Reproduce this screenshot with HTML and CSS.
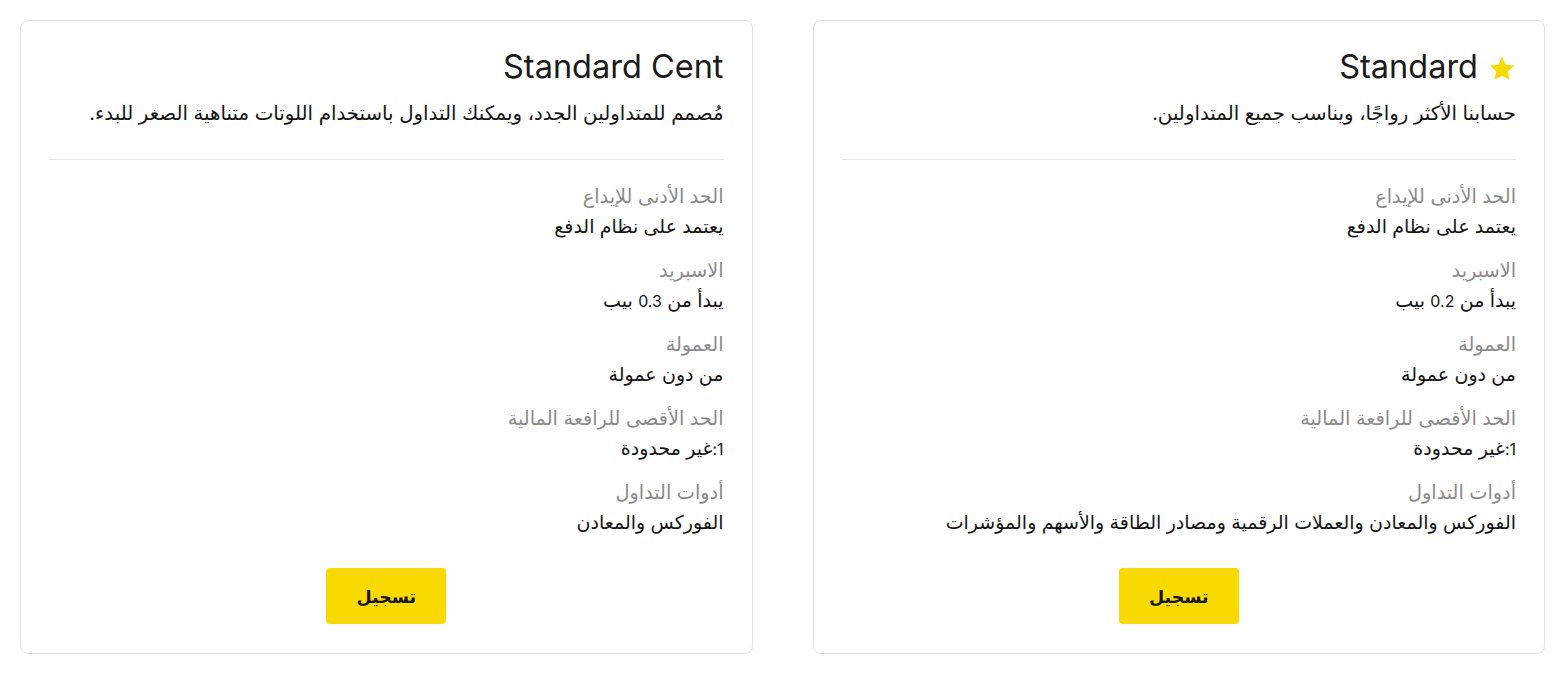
FILE: index.html
```html
<!DOCTYPE html>
<html lang="ar" dir="rtl">
<head>
    <meta charset="UTF-8">
    <meta name="viewport" content="width=device-width, initial-scale=1.0">
    <title>Account types</title>
    <link rel="stylesheet" href="styles.css">
</head>
<body>
    <div class="plans">
        <!-- Standard -->
        <div class="card">
            <div class="card-head">
                <h2 class="title">
                    <svg class="star" viewBox="0 0 24 24" width="28" height="28"><path d="M12 1.6l3.1 6.7 7.3.8-5.45 5 1.55 7.2L12 17.7l-6.5 3.6 1.55-7.2L1.6 9.1l7.3-.8z" fill="#f8d900"/></svg>
                    <span dir="ltr">Standard</span>
                </h2>
                <p class="desc">حسابنا الأكثر رواجًا، ويناسب جميع المتداولين.</p>
            </div>
            <div class="specs">
                <div class="spec">
                    <div class="label">الحد الأدنى للإيداع</div>
                    <div class="value">يعتمد على نظام الدفع</div>
                </div>
                <div class="spec">
                    <div class="label">الاسبريد</div>
                    <div class="value">يبدأ من <span class="num">0.2</span> بيب</div>
                </div>
                <div class="spec">
                    <div class="label">العمولة</div>
                    <div class="value">من دون عمولة</div>
                </div>
                <div class="spec">
                    <div class="label">الحد الأقصى للرافعة المالية</div>
                    <div class="value"><span class="num">1:</span>غير محدودة</div>
                </div>
                <div class="spec">
                    <div class="label">أدوات التداول</div>
                    <div class="value">الفوركس والمعادن والعملات الرقمية ومصادر الطاقة والأسهم والمؤشرات</div>
                </div>
            </div>
            <div class="card-foot">
                <a class="btn" href="#">تسجيل</a>
            </div>
        </div>

        <!-- Standard Cent -->
        <div class="card">
            <div class="card-head">
                <h2 class="title"><span dir="ltr">Standard Cent</span></h2>
                <p class="desc">مُصمم للمتداولين الجدد، ويمكنك التداول باستخدام اللوتات متناهية الصغر للبدء.</p>
            </div>
            <div class="specs">
                <div class="spec">
                    <div class="label">الحد الأدنى للإيداع</div>
                    <div class="value">يعتمد على نظام الدفع</div>
                </div>
                <div class="spec">
                    <div class="label">الاسبريد</div>
                    <div class="value">يبدأ من <span class="num">0.3</span> بيب</div>
                </div>
                <div class="spec">
                    <div class="label">العمولة</div>
                    <div class="value">من دون عمولة</div>
                </div>
                <div class="spec">
                    <div class="label">الحد الأقصى للرافعة المالية</div>
                    <div class="value"><span class="num">1:</span>غير محدودة</div>
                </div>
                <div class="spec">
                    <div class="label">أدوات التداول</div>
                    <div class="value">الفوركس والمعادن</div>
                </div>
            </div>
            <div class="card-foot">
                <a class="btn" href="#">تسجيل</a>
            </div>
        </div>
    </div>
</body>
</html>
```

FILE: styles.css
```css
body{
    margin: 0;
    background-color: #fff;
    font-family: Inter, "DejaVu Sans", sans-serif;
    color: #141414;
}

.plans{
    display: flex;
    gap: 60px;
    padding: 20px 23px 20px 20px;
}

.card{
    flex: 1;
    border: 1px solid #e2e2e2;
    border-radius: 8px;
    padding: 28px 28px 29px;
    display: flex;
    flex-direction: column;
}

.title{
    margin: 0;
    display: flex;
    align-items: center;
    gap: 10px;
    font-size: 32.5px;
    font-weight: 400;
    line-height: 36px;
    color: #1a1a1a;
}
.star{
    margin-top: 4px;
}
/* arabic glyphs of the fallback font run small, so the text is set larger */
.desc{
    margin: 16px 0 0;
    font-size: 19.8px;
    line-height: 24px;
}

.specs{
    border-top: 1px solid #e6e6e6;
    margin-top: 34px;
    padding-top: 22px;
    display: flex;
    flex-direction: column;
    gap: 15px;
    flex: 1;
}
.label{
    font-size: 19.3px;
    line-height: 28px;
    color: #8b8b8b;
}
.value{
    margin-top: 3px;
    font-size: 19px;
    line-height: 28px;
}
.num{
    font-size: 16px;
}

.card-foot{
    display: flex;
    justify-content: center;
    margin-top: 31px;
}
.btn{
    display: flex;
    align-items: center;
    justify-content: center;
    width: 120px;
    height: 56px;
    background-color: #f8d900;
    border-radius: 4px;
    color: #141414;
    font-weight: 700;
    font-size: 17.5px;
    text-decoration: none;
}
```
